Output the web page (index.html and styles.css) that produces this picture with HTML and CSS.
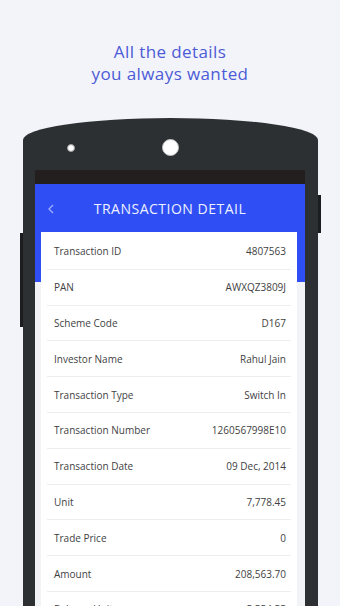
FILE: index.html
```html
<!DOCTYPE html>
<html lang="en">
<head>
    <meta charset="UTF-8">
    <meta name="viewport" content="width=device-width, initial-scale=1.0">
    <title>Transaction Detail</title>
    <link rel="stylesheet" href="styles.css">
</head>
<body>
    <h1 class="tagline">All the details<br>you always wanted</h1>

    <div class="phone">
        <div class="sensors">
            <div class="earpiece"></div>
            <div class="camera"></div>
        </div>

        <div class="screen">
            <div class="status-bar"></div>
            <div class="app-bar">
                <svg class="back" width="8" height="10" viewBox="0 0 8 10">
                    <polyline points="6,1 2,5 6,9" fill="none" stroke="#9fb0ff" stroke-width="1.3"/>
                </svg>
                <div class="app-title">TRANSACTION DETAIL</div>
            </div>

            <div class="content">
                <div class="card">
                    <div class="row"><span>Transaction ID</span><span>4807563</span></div>
                    <div class="row"><span>PAN</span><span>AWXQZ3809J</span></div>
                    <div class="row"><span>Scheme Code</span><span>D167</span></div>
                    <div class="row"><span>Investor Name</span><span>Rahul Jain</span></div>
                    <div class="row"><span>Transaction Type</span><span>Switch In</span></div>
                    <div class="row"><span>Transaction Number</span><span>1260567998E10</span></div>
                    <div class="row"><span>Transaction Date</span><span>09 Dec, 2014</span></div>
                    <div class="row"><span>Unit</span><span>7,778.45</span></div>
                    <div class="row"><span>Trade Price</span><span>0</span></div>
                    <div class="row"><span>Amount</span><span>208,563.70</span></div>
                    <div class="row"><span>Balance Units</span><span>5,554.55</span></div>
                </div>
            </div>
        </div>
    </div>
</body>
</html>
```

FILE: styles.css
```css
* {
    margin: 0;
    padding: 0;
    box-sizing: border-box;
}

body {
    background: #f3f4fa;
    font-family: 'Open Sans', 'Noto Sans', sans-serif;
    height: 100vh;
    overflow: hidden;
}

.tagline {
    margin-top: 41px;
    text-align: center;
    font-size: 17px;
    line-height: 22px;
    letter-spacing: 0.4px;
    font-weight: 400;
    color: #4c5bd6;
}

.phone {
    position: relative;
    margin: 33px 0 0 23px;
    width: 295px;
    height: 540px;
    background: #2c3032;
    border-radius: 50% 50% 0 0 / 22px 22px 0 0;
    padding: 21px 13px 0 12px;
}

/* side buttons */
.phone::before {
    content: '';
    position: absolute;
    left: -3px;
    top: 115px;
    width: 3px;
    height: 94px;
    background: #1b1d1e;
}

.phone::after {
    content: '';
    position: absolute;
    right: -3px;
    top: 77px;
    width: 3px;
    height: 38px;
    background: #1b1d1e;
}

.sensors {
    display: flex;
    align-items: center;
    height: 17px;
    padding-left: 32px;
    gap: 87px;
}

.earpiece {
    width: 8px;
    height: 8px;
    border-radius: 50%;
    background: #fff;
    border: 1px solid #9a9c9d;
}

.camera {
    width: 17px;
    height: 17px;
    border-radius: 50%;
    background: #fff;
    border: 1px solid #bfc1c2;
}

.screen {
    margin-top: 14px;
    height: 500px;
    background: #f2f3f7;
}

.status-bar {
    height: 14px;
    background: #221f1e;
}

.app-bar {
    position: relative;
    height: 48px;
    background: #2f4ff4;
    display: flex;
    align-items: center;
    justify-content: center;
}

.back {
    position: absolute;
    left: 12px;
    top: 20px;
}

.app-title {
    color: #eef1ff;
    font-size: 14px;
    letter-spacing: 0.5px;
    font-weight: 500;
}

.content {
    background: linear-gradient(#2f4ff4 50px, #f2f3f7 50px);
    padding: 0 8px 0 6px;
}

.card {
    background: #fff;
    padding: 2px 6px 0;
}

.row {
    height: 35.8px;
    display: flex;
    align-items: center;
    justify-content: space-between;
    padding: 0 5px 0 7px;
    border-bottom: 1px solid #eeeeef;
    font-size: 10px;
    color: #3f3f3f;
}
```
